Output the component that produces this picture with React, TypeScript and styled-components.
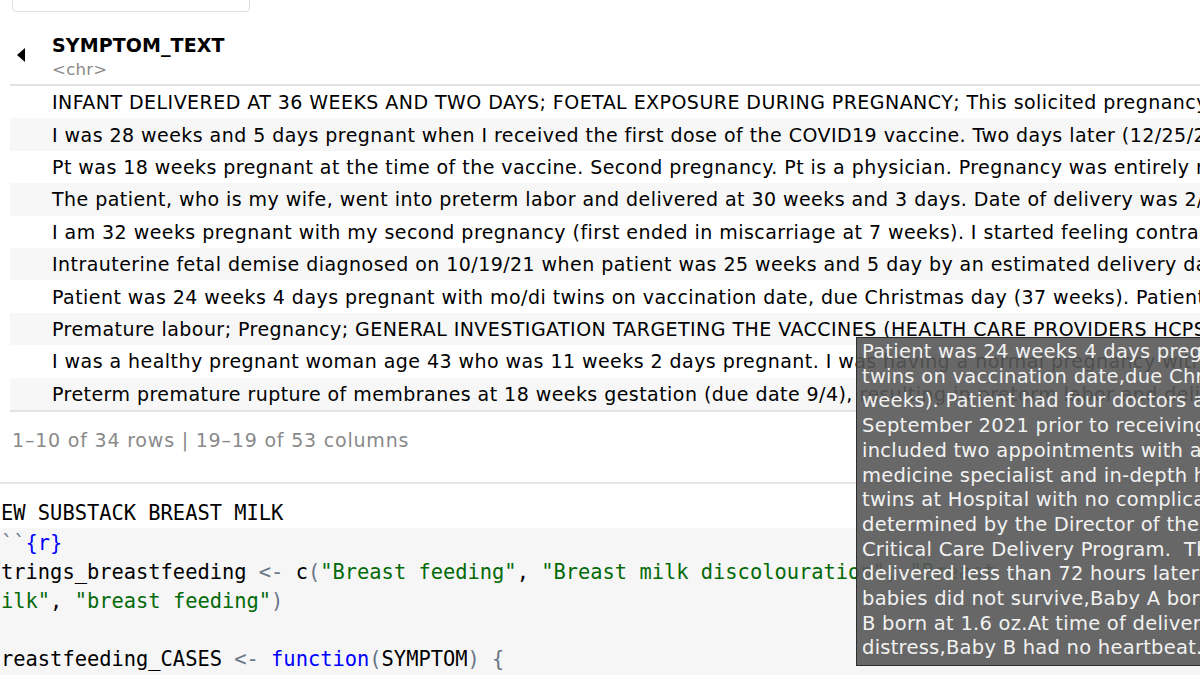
import React from 'react'
import styled, { createGlobalStyle } from 'styled-components'

const GlobalStyle = createGlobalStyle`
	html, body {
		margin: 0;
		padding: 0;
		background: #ffffff;
		overflow: hidden;
	}
`

const ui = `"DejaVu Sans", Verdana, sans-serif`
const mono = `"DejaVu Sans Mono", "Liberation Mono", monospace`

const rows = [
	'INFANT DELIVERED AT 36 WEEKS AND TWO DAYS; FOETAL EXPOSURE DURING PREGNANCY; This solicited pregnancy report was received from a consumer',
	'I was 28 weeks and 5 days pregnant when I received the first dose of the COVID19 vaccine. Two days later (12/25/2020) I started',
	'Pt was 18 weeks pregnant at the time of the vaccine. Second pregnancy. Pt is a physician. Pregnancy was entirely normal until',
	'The patient, who is my wife, went into preterm labor and delivered at 30 weeks and 3 days. Date of delivery was 2/14/2021',
	'I am 32 weeks pregnant with my second pregnancy (first ended in miscarriage at 7 weeks). I started feeling contractions',
	'Intrauterine fetal demise diagnosed on 10/19/21 when patient was 25 weeks and 5 day by an estimated delivery date of',
	'Patient was 24 weeks 4 days pregnant with mo/di twins on vaccination date, due Christmas day (37 weeks). Patient had four',
	'Premature labour; Pregnancy; GENERAL INVESTIGATION TARGETING THE VACCINES (HEALTH CARE PROVIDERS HCPS) This case',
	'I was a healthy pregnant woman age 43 who was 11 weeks 2 days pregnant. I was having a normal pregnancy with no complications',
	'Preterm premature rupture of membranes at 18 weeks gestation (due date 9/4), resulting in preterm labor and delivery',
]

const tipLines = [
	'Patient was 24 weeks 4 days pregnant with mo/di',
	'twins on vaccination date,due Christmas day (37',
	'weeks). Patient had four doctors appointments in',
	'September 2021 prior to receiving vaccine. These',
	'included two appointments with a maternal fetal',
	'medicine specialist and in-depth health check of',
	'twins at Hospital with no complications as',
	'determined by the Director of the Maternal Fetal',
	'Critical Care Delivery Program.  The twins were',
	'delivered less than 72 hours later after vaccine',
	'babies did not survive,Baby A born at 1.2 oz,Baby',
	'B born at 1.6 oz.At time of delivery Baby A was in',
	'distress,Baby B had no heartbeat.',
]

const Page = styled.div`
	position: relative;
	width: 1200px;
	height: 675px;
	overflow: hidden;
	font-family: ${ui};
	color: #000;
`

const Output = styled.div`
	padding: 0 0 0 10px;
`

const DescBox = styled.div`
	margin: -26px 0 0 2px;
	width: 220px;
	height: 36px;
	padding: 0 8px;
	border: 1px solid #dedede;
	border-radius: 4px;
	font-size: 17px;
	line-height: 24px;
	color: #333;
	white-space: nowrap;
	overflow: hidden;
`

const Table = styled.div`
	margin-top: 22px;
	display: flex;
	flex-direction: column;
`

const HeaderRow = styled.div`
	display: flex;
	align-items: flex-start;
	height: 50px;
	border-bottom: 2px solid #e3e3e3;
`

const SortSlot = styled.div`
	align-self: center;
	width: 42px;
	display: flex;
	justify-content: center;
	box-sizing: border-box;
	padding: 0 20px 8px 0;
`

const HeaderCell = styled.div`
	display: flex;
	flex-direction: column;
`

const ColName = styled.span`
	font-weight: bold;
	font-size: 19px;
	line-height: 22px;
	letter-spacing: 0.1px;
`

const ColType = styled.span`
	margin-top: 2.5px;
	font-size: 16.5px;
	line-height: 21px;
	letter-spacing: 0.3px;
	color: #8a8a8a;
`

const Row = styled.div<{ $striped: boolean }>`
	height: 32.4px;
	display: flex;
	align-items: center;
	padding-left: 42px;
	background: ${(p) => (p.$striped ? '#f7f7f7' : '#ffffff')};
	font-size: 19px;
	letter-spacing: 0.45px;
	white-space: nowrap;
	overflow: hidden;
`

const TableEnd = styled.div`
	border-top: 2px solid #e3e3e3;
`

const Footer = styled.div`
	padding: 17px 0 0 2px;
	height: 70px;
	box-sizing: border-box;
	font-size: 19px;
	letter-spacing: 0.8px;
	color: #8a8a8a;
`

const Divider = styled.div`
	border-top: 2px solid #e6e6e6;
`

const Heading = styled.div`
	height: 44px;
	box-sizing: border-box;
	padding: 17px 0 0 1px;
	line-height: 24px;
	font-family: ${mono};
	font-size: 20.4px;
	white-space: pre;
`

const Chunk = styled.div`
	background: #f6f6f6;
	padding: 1px 0 0 1px;
	height: 200px;
`

const CodeLine = styled.div`
	height: 29px;
	line-height: 29px;
	font-family: ${mono};
	font-size: 20.4px;
	white-space: pre;
`

const Str = styled.span`
	color: #036a07;
`

const Kw = styled.span`
	color: #0000ff;
`

const Op = styled.span`
	color: #687687;
`

const Tooltip = styled.div`
	position: absolute;
	left: 856px;
	top: 337px;
	width: 500px;
	padding: 2px 6px 4px 5px;
	background: rgba(88, 88, 88, 0.9);
	border: 1px solid #2e2e2e;
	color: #f2f2f2;
	font-family: ${ui};
	font-size: 19.5px;
	letter-spacing: 0.25px;
	line-height: 24.7px;
	white-space: pre;
`

const SortArrow = () => (
	<svg width="10" height="16" viewBox="0 0 10 16">
		<path d="M9 1 L1 8 L9 15 Z" fill="#000" />
	</svg>
)

export default function App() {
	return (
		<Page>
			<GlobalStyle />
			<Output>
				<DescBox>Description: df [34 × 53]</DescBox>
				<Table>
					<HeaderRow>
						<SortSlot>
							<SortArrow />
						</SortSlot>
						<HeaderCell>
							<ColName>SYMPTOM_TEXT</ColName>
							<ColType>&lt;chr&gt;</ColType>
						</HeaderCell>
					</HeaderRow>
					{rows.map((text, i) => (
						<Row key={i} $striped={i % 2 === 1}>
							{text}
						</Row>
					))}
					<TableEnd />
				</Table>
				<Footer>1–10 of 34 rows | 19–19 of 53 columns</Footer>
			</Output>
			<Divider />
			<Heading>EW SUBSTACK BREAST MILK</Heading>
			<Chunk>
				<CodeLine>
					<Op>``</Op>
					<Kw>{'{r}'}</Kw>
				</CodeLine>
				<CodeLine>
					trings_breastfeeding <Op>&lt;-</Op> c<Op>(</Op>
					<Str>"Breast feeding"</Str>, <Str>"Breast milk discolouration"</Str>,{' '}
					<Str>"Breast</Str>
				</CodeLine>
				<CodeLine>
					<Str>ilk"</Str>, <Str>"breast feeding"</Str>
					<Op>)</Op>
				</CodeLine>
				<CodeLine> </CodeLine>
				<CodeLine>
					reastfeeding_CASES <Op>&lt;-</Op> <Kw>function</Kw>
					<Op>(</Op>SYMPTOM<Op>)</Op> <Op>{'{'}</Op>
				</CodeLine>
			</Chunk>
			<Tooltip>{tipLines.join('\n')}</Tooltip>
		</Page>
	)
}
